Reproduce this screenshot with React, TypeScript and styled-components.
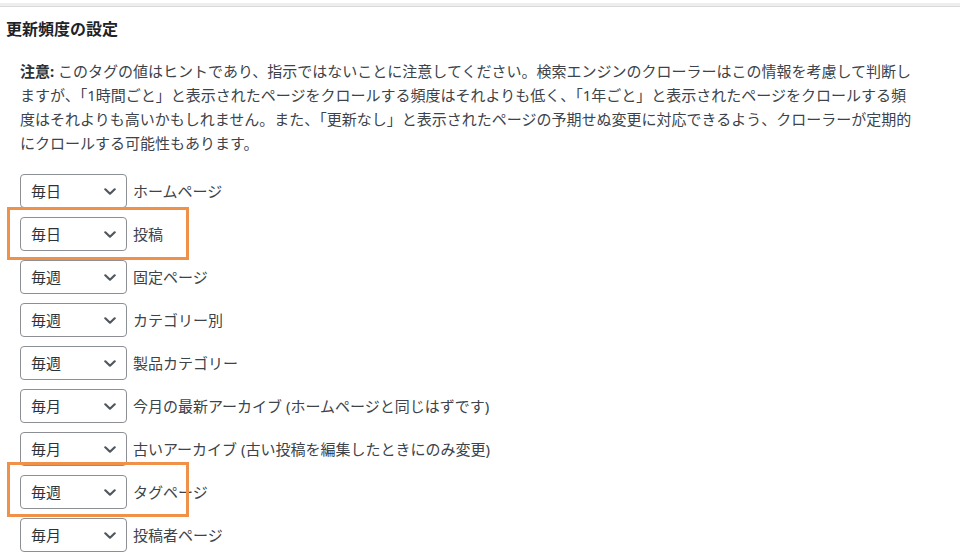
import React from "react";
import styled, { createGlobalStyle } from "styled-components";

const Global = createGlobalStyle`
  html, body { margin: 0; padding: 0; background: #ffffff; }
  body {
    font-family: "Noto Sans", "Noto Sans CJK JP", sans-serif;
    color: #3c434a;
  }
`;

const Page = styled.div`
  width: 960px;
  height: 554px;
  overflow: hidden;
  background: #ffffff;
`;

const TopRule = styled.div`
  margin-top: 3px;
  height: 3px;
  background: #eeeeee;
  border-bottom: 1px solid #d9d9d9;
`;

const Heading = styled.h2`
  margin: 10px 0 0 6px;
  font-size: 16px;
  line-height: 24px;
  font-weight: 700;
  color: #1d2327;
`;

const Note = styled.p`
  margin: 18px 0 0 20px;
  font-size: 15px;
  line-height: 24px;
  color: #3c434a;
  white-space: nowrap;
`;

const NoteLine = styled.span`
  display: block;
`;

const Strong = styled.strong`
  font-weight: 700;
  color: #2c3338;
`;

const List = styled.div`
  display: flex;
  flex-direction: column;
  gap: 9px;
  margin: 19px 0 0 20px;
`;

const Row = styled.div`
  position: relative;
  display: flex;
  align-items: center;
  gap: 6px;
  height: 34px;
`;

const SelectWrap = styled.div`
  position: relative;
  width: 107px;
  height: 34px;
  flex: none;
`;

const Select = styled.select`
  appearance: none;
  -webkit-appearance: none;
  box-sizing: border-box;
  width: 100%;
  height: 100%;
  margin: 0;
  padding: 0 24px 0 10px;
  border: 1px solid #8c8f94;
  border-radius: 4px;
  background: #ffffff;
  font-family: "Noto Sans", "Noto Sans CJK JP", sans-serif;
  font-size: 15px;
  color: #2c3338;
`;

const Chevron = styled.svg`
  position: absolute;
  right: 11px;
  top: 50%;
  margin-top: -3px;
  width: 12px;
  height: 7px;
  pointer-events: none;
`;

const Label = styled.span`
  font-size: 15px;
  line-height: 24px;
  color: #3c434a;
  white-space: nowrap;
`;

const Highlight = styled.div<{ $top: number; $height: number }>`
  position: absolute;
  left: -13px;
  top: ${(p) => p.$top}px;
  width: 182px;
  height: ${(p) => p.$height}px;
  box-sizing: border-box;
  border: 3px solid #f0914a;
  pointer-events: none;
`;

const options = ["毎時", "毎日", "毎週", "毎月", "毎年", "更新なし"];

type Item = {
  value: string;
  label: string;
  highlight?: { top: number; height: number };
};

const items: Item[] = [
  { value: "毎日", label: "ホームページ" },
  { value: "毎日", label: "投稿", highlight: { top: -10, height: 53 } },
  { value: "毎週", label: "固定ページ" },
  { value: "毎週", label: "カテゴリー別" },
  { value: "毎週", label: "製品カテゴリー" },
  { value: "毎月", label: "今月の最新アーカイブ (ホームページと同じはずです)" },
  { value: "毎月", label: "古いアーカイブ (古い投稿を編集したときにのみ変更)" },
  { value: "毎週", label: "タグページ", highlight: { top: -13, height: 55 } },
  { value: "毎月", label: "投稿者ページ" },
];

export default function App() {
  return (
    <Page>
      <Global />
      <TopRule />
      <Heading>更新頻度の設定</Heading>
      <Note>
        <NoteLine>
          <Strong>注意:</Strong> このタグの値はヒントであり、指示ではないことに注意してください。検索エンジンのクローラーはこの情報を考慮して判断し
        </NoteLine>
        <NoteLine>
          ますが、「1時間ごと」と表示されたページをクロールする頻度はそれよりも低く、「1年ごと」と表示されたページをクロールする頻
        </NoteLine>
        <NoteLine>
          度はそれよりも高いかもしれません。また、「更新なし」と表示されたページの予期せぬ変更に対応できるよう、クローラーが定期的
        </NoteLine>
        <NoteLine>にクロールする可能性もあります。</NoteLine>
      </Note>
      <List>
        {items.map((it, i) => (
          <Row key={i}>
            <SelectWrap>
              <Select defaultValue={it.value}>
                {options.map((o) => (
                  <option key={o} value={o}>
                    {o}
                  </option>
                ))}
              </Select>
              <Chevron viewBox="0 0 12 7" fill="none">
                <path
                  d="M1.3 1.3 L6 5.7 L10.7 1.3"
                  stroke="#50575e"
                  strokeWidth="2.2"
                  strokeLinecap="round"
                  strokeLinejoin="round"
                />
              </Chevron>
            </SelectWrap>
            <Label>{it.label}</Label>
            {it.highlight && (
              <Highlight $top={it.highlight.top} $height={it.highlight.height} />
            )}
          </Row>
        ))}
      </List>
    </Page>
  );
}
